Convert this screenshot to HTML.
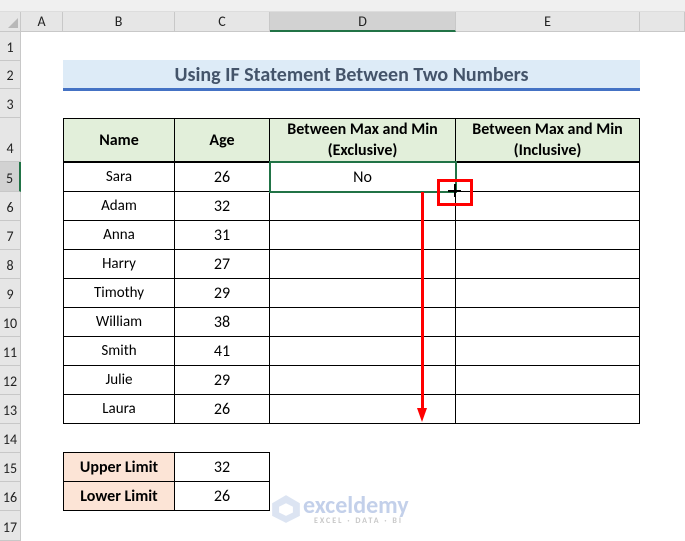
<!DOCTYPE html>
<html><head><style>
body{margin:0;width:685px;height:541px;overflow:hidden;background:#fff;font-family:Calibri,"Liberation Sans",sans-serif;position:relative}
div{position:absolute;box-sizing:border-box}
.rh{left:0;width:21px;background:#e6e6e6;border-bottom:1px solid #c8c8c8;border-right:1px solid #c8c8c8;text-align:center;font-size:14px;color:#222;display:flex;align-items:flex-end;justify-content:center;padding-bottom:4px}
.ch{top:12px;height:20px;background:#e6e6e6;border-right:1px solid #c8c8c8;border-bottom:1px solid #c8c8c8;text-align:center;font-size:14px;line-height:20px;color:#222}
.c{border:1px solid #000;display:flex;align-items:center;justify-content:center;font-size:15px;color:#000;margin:-1px 0 0 -1px}
.h{background:#e2efda;font-weight:bold;font-size:16px;text-align:center;line-height:21px}
.o{background:#fce4d6;font-weight:bold;font-size:16px}
</style></head><body>
<div style="left:0;top:0;width:685px;height:12px;background:#f0f0f0;border-bottom:1px solid #ddd"></div>
<div class="ch" style="left:0;width:21px;"></div>
<div style="left:8px;top:18px;width:0;height:0;border-left:10px solid transparent;border-bottom:10px solid #b8b8b8"></div>
<div class="ch" style="left:21px;width:42px">A</div>
<div class="ch" style="left:63px;width:112px">B</div>
<div class="ch" style="left:175px;width:95px">C</div>
<div class="ch" style="left:270px;width:186px;background:#d2d2d2;border-bottom:2px solid #217346">D</div>
<div class="ch" style="left:456px;width:184px">E</div>
<div class="ch" style="left:640px;width:45px"></div>

<div class="rh" style="top:32px;height:29px">1</div>
<div class="rh" style="top:61px;height:28px">2</div>
<div class="rh" style="top:89px;height:29px">3</div>
<div class="rh" style="top:118px;height:44px">4</div>
<div class="rh" style="top:162px;height:30px;background:#d2d2d2;border-right:2px solid #217346">5</div>
<div class="rh" style="top:192px;height:29px">6</div>
<div class="rh" style="top:221px;height:29px">7</div>
<div class="rh" style="top:250px;height:29px">8</div>
<div class="rh" style="top:279px;height:29px">9</div>
<div class="rh" style="top:308px;height:29px">10</div>
<div class="rh" style="top:337px;height:29px">11</div>
<div class="rh" style="top:366px;height:29px">12</div>
<div class="rh" style="top:395px;height:29px">13</div>
<div class="rh" style="top:424px;height:29px">14</div>
<div class="rh" style="top:453px;height:29px">15</div>
<div class="rh" style="top:482px;height:29px">16</div>
<div class="rh" style="top:511px;height:30px">17</div>

<div style="left:63px;top:60px;width:577px;height:28px;background:#ddebf7;text-align:center;font-weight:bold;font-size:20px;line-height:30px;color:#44546a">Using IF Statement Between Two Numbers</div>
<div style="left:63px;top:88px;width:577px;height:3px;background:#4472c4"></div>

<div class="c h" style="left:64px;top:119px;width:112px;height:44px">Name</div>
<div class="c h" style="left:175px;top:119px;width:96px;height:44px">Age</div>
<div class="c h" style="left:270px;top:119px;width:187px;height:44px">Between Max and Min<br>(Exclusive)</div>
<div class="c h" style="left:456px;top:119px;width:185px;height:44px">Between Max and Min<br>(Inclusive)</div>

<div class="c" style="left:64px;top:163px;width:112px;height:30px">Sara</div><div class="c" style="left:175px;top:163px;width:96px;height:30px;font-size:16px">26</div><div class="c" style="left:270px;top:163px;width:187px;height:30px;font-size:16px">No</div><div class="c" style="left:456px;top:163px;width:185px;height:30px"></div>
<div class="c" style="left:64px;top:192px;width:112px;height:30px">Adam</div><div class="c" style="left:175px;top:192px;width:96px;height:30px;font-size:16px">32</div><div class="c" style="left:270px;top:192px;width:187px;height:30px"></div><div class="c" style="left:456px;top:192px;width:185px;height:30px"></div>
<div class="c" style="left:64px;top:221px;width:112px;height:30px">Anna</div><div class="c" style="left:175px;top:221px;width:96px;height:30px;font-size:16px">31</div><div class="c" style="left:270px;top:221px;width:187px;height:30px"></div><div class="c" style="left:456px;top:221px;width:185px;height:30px"></div>
<div class="c" style="left:64px;top:250px;width:112px;height:30px">Harry</div><div class="c" style="left:175px;top:250px;width:96px;height:30px;font-size:16px">27</div><div class="c" style="left:270px;top:250px;width:187px;height:30px"></div><div class="c" style="left:456px;top:250px;width:185px;height:30px"></div>
<div class="c" style="left:64px;top:279px;width:112px;height:30px">Timothy</div><div class="c" style="left:175px;top:279px;width:96px;height:30px;font-size:16px">29</div><div class="c" style="left:270px;top:279px;width:187px;height:30px"></div><div class="c" style="left:456px;top:279px;width:185px;height:30px"></div>
<div class="c" style="left:64px;top:308px;width:112px;height:30px">William</div><div class="c" style="left:175px;top:308px;width:96px;height:30px;font-size:16px">38</div><div class="c" style="left:270px;top:308px;width:187px;height:30px"></div><div class="c" style="left:456px;top:308px;width:185px;height:30px"></div>
<div class="c" style="left:64px;top:337px;width:112px;height:30px">Smith</div><div class="c" style="left:175px;top:337px;width:96px;height:30px;font-size:16px">41</div><div class="c" style="left:270px;top:337px;width:187px;height:30px"></div><div class="c" style="left:456px;top:337px;width:185px;height:30px"></div>
<div class="c" style="left:64px;top:366px;width:112px;height:30px">Julie</div><div class="c" style="left:175px;top:366px;width:96px;height:30px;font-size:16px">29</div><div class="c" style="left:270px;top:366px;width:187px;height:30px"></div><div class="c" style="left:456px;top:366px;width:185px;height:30px"></div>
<div class="c" style="left:64px;top:395px;width:112px;height:30px">Laura</div><div class="c" style="left:175px;top:395px;width:96px;height:30px;font-size:16px">26</div><div class="c" style="left:270px;top:395px;width:187px;height:30px"></div><div class="c" style="left:456px;top:395px;width:185px;height:30px"></div>

<div class="c o" style="left:64px;top:453px;width:112px;height:30px">Upper Limit</div><div class="c" style="left:175px;top:453px;width:96px;height:30px;font-size:16px">32</div>
<div class="c o" style="left:64px;top:482px;width:112px;height:30px">Lower Limit</div><div class="c" style="left:175px;top:482px;width:96px;height:30px;font-size:16px">26</div>

<div style="left:269px;top:161px;width:188px;height:32px;border:2px solid #217346"></div>
<div style="left:437px;top:179px;width:36px;height:27px;border:3px solid #f00"></div>
<div style="left:448px;top:190px;width:13px;height:2px;background:#000"></div>
<div style="left:454px;top:184px;width:2px;height:13px;background:#000"></div>
<div style="left:421px;top:192px;width:3px;height:218px;background:#f00"></div>
<div style="left:417px;top:408px;width:0;height:0;border-left:5px solid transparent;border-right:5px solid transparent;border-top:14px solid #f00"></div>

<div style="left:271px;top:494px;width:30px;height:30px;opacity:.4"><svg width="30" height="30" viewBox="0 0 26 26"><path d="M13 1 L25 8 L25 19 L13 25 L1 19 L1 8 Z" fill="#a9bde0"/><path d="M13 8 L19 11 L19 16 L13 19 L7 16 L7 11Z" fill="#fff"/></svg></div>
<div style="left:303px;top:494px;font-size:24px;color:#c3d0ea;font-weight:bold;line-height:24px">exceldemy</div>
<div style="left:314px;top:516px;font-size:8px;color:#c8c8c8;letter-spacing:2px;font-weight:bold">EXCEL · DATA · BI</div>
</body></html>
